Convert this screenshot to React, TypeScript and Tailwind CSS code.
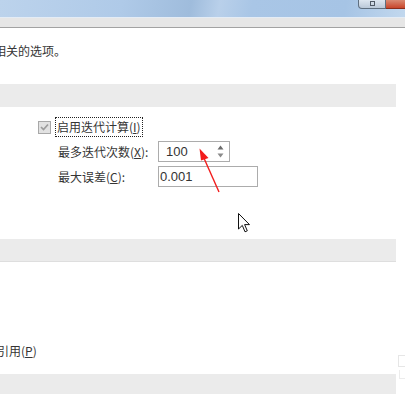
import React from 'react';

// Access-key letter, underlined like the Windows dialog labels
function Key({ k }: { k: string }) {
    return <span className="underline underline-offset-1">{k}</span>;
}

function TitleBar() {
    return (
        <div className="relative h-[17px] bg-[linear-gradient(100deg,#bcd3ec_0%,#afcae8_30%,#9fbcdc_47%,#b9d0ea_54%,#a9c6e6_62%,#a6c4e5_85%,#c2d8ee_100%)]">
            <div className="absolute right-0 top-0 flex">
                <div className="w-[28px] h-[9px] rounded-bl-[4px] border border-t-0 border-[#5f6f80] bg-[linear-gradient(#dde6f0,#bac8d8)] flex items-start justify-center">
                    <div className="w-[5px] h-[5px] mt-[1px] border border-[#505a66]" />
                </div>
                <div className="w-[19px] h-[9px] border-b border-[#8a2e1c] bg-[linear-gradient(#d98a72,#c8462b)]" />
            </div>
        </div>
    );
}

function SpinBox() {
    return (
        <div className="relative w-[72px] h-[21px] border border-[#acacac] bg-white flex items-center pl-[7px]">
            <span className="font-['Liberation_Sans',sans-serif] text-[13px] text-[#333]">100</span>
            <svg className="absolute right-[5px] top-[3px]" width="7" height="13" viewBox="0 0 7 13">
                <path d="M3.5 0.5 L6.5 4.5 L0.5 4.5 Z" fill="#6b6b6b" />
                <path d="M0.5 8.5 L6.5 8.5 L3.5 12.5 Z" fill="#8a8a8a" />
            </svg>
        </div>
    );
}

export default function App() {
    return (
        <div className="relative w-[405px] h-[394px] overflow-hidden bg-white text-[12px] text-[#353535] font-['Microsoft_YaHei','Noto_Sans_CJK_SC',sans-serif]">
            <TitleBar />
            <div className="h-px bg-[#e4ecf5]" />
            <div className="h-[10px] bg-[#e6e6e6] border-b border-[#a2a2a2]" />

            <div className="w-[396px]">
                <p className="mt-[15px] leading-4 ml-[-6px] whitespace-nowrap">相关的选项。</p>

                <div className="mt-[25px] h-[23px] bg-[#ebebeb]" />

                {/* Iteration settings */}
                <div className="mt-[10px] h-[20px] pl-[38px] flex items-center">
                    <div className="w-[13px] h-[13px] border border-[#a8a8a8] bg-[#e2e2e2] flex items-center justify-center">
                        <svg width="9" height="8" viewBox="0 0 9 8">
                            <path d="M1 4 L3.5 6.5 L8 1.5" fill="none" stroke="#9c9c9c" strokeWidth="1.7" />
                        </svg>
                    </div>
                    <div className="ml-[4px] h-[20px] px-[1px] border border-dotted border-[#222] flex items-center whitespace-nowrap">
                        启用迭代计算(<Key k="I" />)
                    </div>
                </div>

                <div className="mt-[4px] h-[21px] pl-[58px] flex items-center">
                    <span className="w-[100px] whitespace-nowrap">最多迭代次数(<Key k="X" />):</span>
                    <SpinBox />
                </div>

                <div className="mt-[4px] h-[21px] pl-[58px] flex items-center">
                    <span className="w-[100px] whitespace-nowrap">最大误差(<Key k="C" />):</span>
                    <div className="w-[100px] h-[21px] border border-[#acacac] flex items-center pl-[1px]">
                        <span className="font-['Liberation_Sans',sans-serif] text-[13px] text-[#333]">0.001</span>
                    </div>
                </div>

                <div className="mt-[52px] h-[23px] bg-[#ebebeb] border-b border-[#dedede]" />

                <p className="mt-[81px] leading-4 ml-[-3px] whitespace-nowrap">引用(<Key k="P" />)</p>

                <div className="mt-[15px] h-[20px] bg-[#ebebeb]" />
            </div>

            {/* Red annotation arrow */}
            <svg className="absolute left-0 top-0" width="405" height="394" viewBox="0 0 405 394">
                <line x1="219" y1="192" x2="203" y2="156" stroke="#f21c1c" strokeWidth="1.4" />
                <path d="M199.5 148.5 L208.5 158 L201 160.5 Z" fill="#f21c1c" />
            </svg>

            {/* Mouse pointer */}
            <svg className="absolute left-[238px] top-[213px]" width="13" height="20" viewBox="0 0 13 20">
                <path d="M0.5 0.5 L0.5 16 L4.3 12.4 L7 18.8 L9.3 17.8 L6.6 11.6 L11.5 11.6 Z" fill="#fff" stroke="#111" strokeWidth="1" strokeLinejoin="round" />
            </svg>

            {/* Faint watermark at the right edge */}
            <div className="absolute left-[398px] top-[355px] w-[7px] h-[12px] border border-r-0 border-[#e6e6e6]" />
            <div className="absolute left-[399px] top-[370px] w-[6px] h-[9px] border-l border-b border-[#ececec]" />
        </div>
    );
}
